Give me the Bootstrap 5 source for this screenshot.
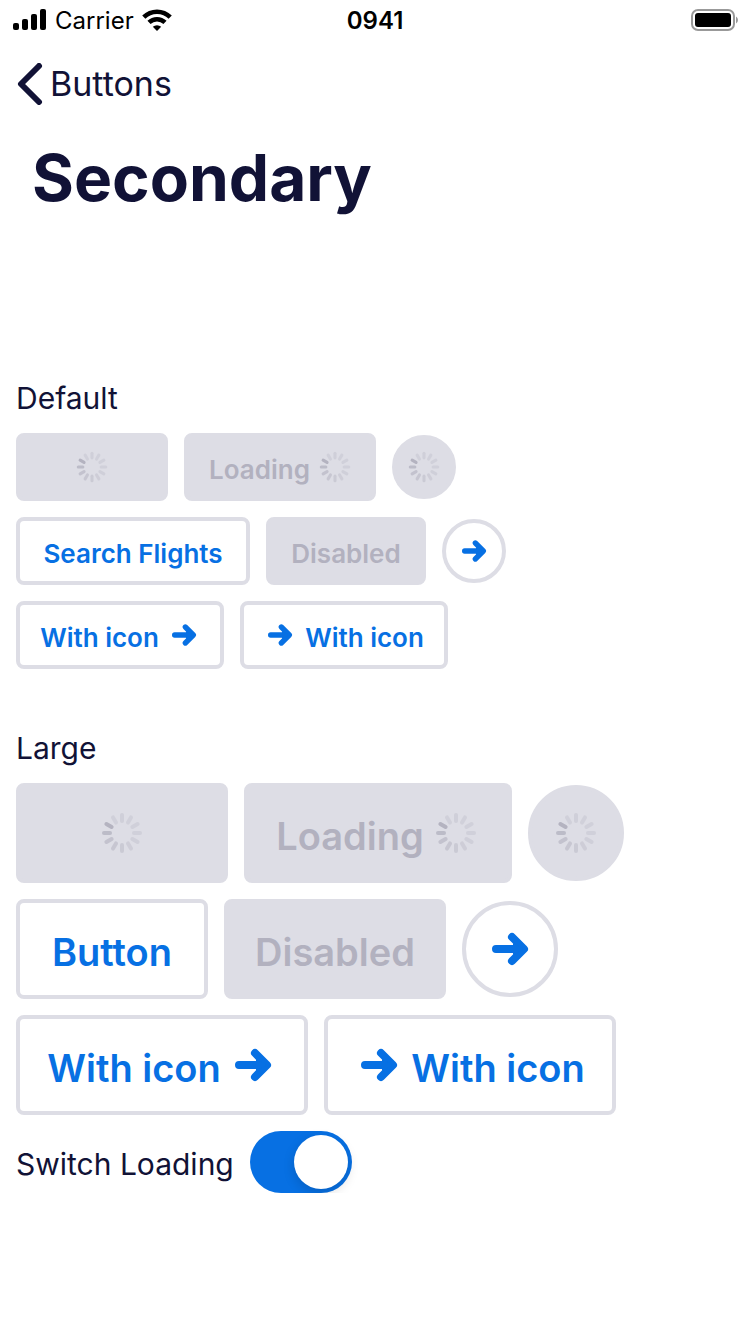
<!DOCTYPE html>
<html lang="en">
<head>
<meta charset="utf-8">
<meta name="viewport" content="width=device-width, initial-scale=1">
<title>Secondary buttons</title>
<link href="https://cdn.jsdelivr.net/npm/bootstrap@5.3.0/dist/css/bootstrap.min.css" rel="stylesheet">
<style>
  :root { --ink: #111236; --blue: #0770e3; --line: #dddde5; --muted: #b2b1bf; }
  body { font-family: Inter, "Liberation Sans", sans-serif; color: var(--ink); background: #fff; }
  svg { display: block; flex: none; }
  .status-bar { height: 40px; padding: 0 12px; font-size: 24px; line-height: 32px; color: #000; }
  .status-bar .side { flex: 1 1 0; }
  .status-bar span { padding-top: 2px; }
  .nav-row { height: 88px; padding: 0 16px; }
  .back-link { color: var(--ink); font-size: 34px; line-height: 40px; gap: 7px; }
  .page-title { font-size: 64px; line-height: 80px; font-weight: 700; margin: 10px 32px 160px; }
  .demo { padding: 0 16px; }
  .demo + .demo { margin-top: 59px; }
  .demo-title { font-size: 30px; line-height: 40px; font-weight: 400; margin: 0 0 15px; }
  .demo-rows { gap: 16px; }
  .sec-btn {
    --bs-btn-color: var(--blue); --bs-btn-bg: #fff; --bs-btn-border-color: var(--line);
    --bs-btn-hover-color: var(--blue); --bs-btn-hover-bg: #f1f2f8; --bs-btn-hover-border-color: var(--line);
    --bs-btn-active-color: var(--blue); --bs-btn-active-bg: #f1f2f8; --bs-btn-active-border-color: var(--line);
    --bs-btn-disabled-color: var(--muted); --bs-btn-disabled-bg: var(--line);
    --bs-btn-disabled-border-color: var(--line); --bs-btn-disabled-opacity: 1;
    --bs-btn-border-width: 4px; --bs-btn-border-radius: 8px;
    --bs-btn-padding-x: 20px; --bs-btn-padding-y: 0; --bs-btn-font-size: 26px; --bs-btn-font-weight: 600;
    display: inline-flex; align-items: center; justify-content: center; gap: 9px;
    height: 68px; white-space: nowrap;
  }
  .sec-btn svg { width: 32px; height: 32px; }
  .sec-btn span { padding-top: 6px; line-height: 32px; }
  .sec-btn.big { --bs-btn-font-size: 38px; --bs-btn-padding-x: 28px; height: 100px; gap: 8px; }
  .sec-btn.big svg { width: 48px; height: 48px; }
  .sec-btn.big span { padding-top: 6px; line-height: 48px; }
  .sec-btn.round { --bs-btn-border-radius: 50%; --bs-btn-padding-x: 0; width: 64px; height: 64px; }
  .sec-btn.round.big { width: 96px; height: 96px; }
  .w-blank { width: 152px; } .w-load { width: 192px; } .w-search { width: 234px; }
  .w-off { width: 160px; } .w-icon { width: 208px; }
  .big.w-blank { width: 212px; } .big.w-load { width: 268px; } .big.w-text { width: 192px; }
  .big.w-off { width: 222px; } .big.w-icon { width: 292px; }
  .switch-row { gap: 16px; margin-top: 16px; }
  .switch-row label { font-size: 30px; line-height: 40px; padding-top: 4px; }
  .toggle.form-check-input {
    display: flex; width: 102px; height: 62px; margin: 0; padding: 4px; border: 0;
    border-radius: 31px; background: var(--line); cursor: pointer;
  }
  .toggle.form-check-input::before {
    content: ""; width: 54px; height: 54px; border-radius: 50%; background: #fff;
    box-shadow: 0 4px 12px rgba(0, 0, 0, .15);
  }
  .toggle.form-check-input:checked { background: var(--blue); justify-content: flex-end; }
</style>
</head>
<body>

<svg width="0" height="0" class="position-absolute" aria-hidden="true">
  <symbol id="arrow" viewBox="0 0 48 48">
    <path d="M10 24H37M26 12L38 24L26 36" fill="none" stroke="currentColor" stroke-width="8" stroke-linecap="round" stroke-linejoin="round"/>
    <path d="M27 18L38 24L27 30Z" fill="currentColor"/>
  </symbol>
  <g id="spokes" stroke="#b2b1bf" stroke-width="4" stroke-linecap="round">
    <path d="M24 6V12" opacity=".3"/>
    <path d="M24 6V12" opacity=".28" transform="rotate(30 24 24)"/>
    <path d="M24 6V12" opacity=".28" transform="rotate(60 24 24)"/>
    <path d="M24 6V12" opacity=".28" transform="rotate(90 24 24)"/>
    <path d="M24 6V12" opacity=".3" transform="rotate(120 24 24)"/>
    <path d="M24 6V12" opacity=".34" transform="rotate(150 24 24)"/>
    <path d="M24 6V12" opacity=".42" transform="rotate(180 24 24)"/>
    <path d="M24 6V12" opacity=".5" transform="rotate(210 24 24)"/>
    <path d="M24 6V12" opacity=".6" transform="rotate(240 24 24)"/>
    <path d="M24 6V12" opacity=".75" transform="rotate(270 24 24)"/>
    <path d="M24 6V12" opacity=".95" transform="rotate(300 24 24)"/>
    <path d="M24 6V12" opacity=".28" transform="rotate(330 24 24)"/>
  </g>
</svg>

<header>
  <div class="status-bar d-flex align-items-center">
    <div class="side d-flex align-items-center gap-2">
      <svg width="35" height="22" viewBox="0 0 35 22" aria-hidden="true">
        <rect x="1" y="14" width="6" height="7" rx="2"/><rect x="10" y="10" width="6" height="11" rx="2"/>
        <rect x="19" y="5" width="6" height="16" rx="2"/><rect x="28" y="0" width="6" height="21" rx="2"/>
      </svg>
      <span>Carrier</span>
      <svg width="30" height="22" viewBox="0 0 30 22" aria-hidden="true" fill="none" stroke="#000" stroke-width="4.500">
        <path d="M1.800 8.200A18.700 18.700 0 0 1 28.200 8.200"/><path d="M7 13.400A11.500 11.500 0 0 1 23 13.400"/>
        <path d="M15 22L10.800 17.800A6.300 6.300 0 0 1 19.200 17.800Z" fill="#000" stroke="none"/>
      </svg>
    </div>
    <span class="fw-semibold">0941</span>
    <div class="side d-flex justify-content-end">
      <svg width="48" height="24" viewBox="0 0 48 24" aria-hidden="true">
        <rect x="2" y="2" width="42" height="20" rx="6" fill="none" stroke="#999" stroke-width="2"/>
        <rect x="5" y="5" width="36" height="14" rx="3"/><path d="M46 8.500Q48 9.500 48 12T46 15.500Z" fill="#999"/>
      </svg>
    </div>
  </div>
  <nav class="nav-row d-flex align-items-center">
    <a href="#" class="back-link d-flex align-items-center text-decoration-none">
      <svg width="27" height="42" viewBox="0 0 27 42" aria-hidden="true"><path d="M23 3L5 21L23 39" fill="none" stroke="currentColor" stroke-width="6" stroke-linecap="round" stroke-linejoin="round"/></svg>
      Buttons
    </a>
  </nav>
</header>

<main>
  <h1 class="page-title">Secondary</h1>

  <section class="demo">
    <h2 class="demo-title">Default</h2>
    <div class="demo-rows d-flex flex-column">
      <div class="d-flex flex-wrap align-items-center gap-3">
        <button type="button" class="btn sec-btn w-blank" disabled aria-label="Loading"><svg viewBox="3 3 42 42"><use href="#spokes"/></svg></button>
        <button type="button" class="btn sec-btn w-load" disabled><span>Loading</span><svg viewBox="3 3 42 42"><use href="#spokes"/></svg></button>
        <button type="button" class="btn sec-btn round" disabled aria-label="Loading"><svg viewBox="3 3 42 42"><use href="#spokes"/></svg></button>
      </div>
      <div class="d-flex flex-wrap align-items-center gap-3">
        <button type="button" class="btn sec-btn w-search"><span>Search Flights</span></button>
        <button type="button" class="btn sec-btn w-off" disabled><span>Disabled</span></button>
        <button type="button" class="btn sec-btn round" aria-label="Next"><svg><use href="#arrow"/></svg></button>
      </div>
      <div class="d-flex flex-wrap align-items-center gap-3">
        <button type="button" class="btn sec-btn w-icon"><span>With icon</span><svg><use href="#arrow"/></svg></button>
        <button type="button" class="btn sec-btn w-icon"><svg><use href="#arrow"/></svg><span>With icon</span></button>
      </div>
    </div>
  </section>

  <section class="demo">
    <h2 class="demo-title">Large</h2>
    <div class="demo-rows d-flex flex-column">
      <div class="d-flex flex-wrap align-items-center gap-3">
        <button type="button" class="btn sec-btn big w-blank" disabled aria-label="Loading"><svg viewBox="0 0 48 48"><use href="#spokes"/></svg></button>
        <button type="button" class="btn sec-btn big w-load" disabled><span>Loading</span><svg viewBox="0 0 48 48"><use href="#spokes"/></svg></button>
        <button type="button" class="btn sec-btn big round" disabled aria-label="Loading"><svg viewBox="0 0 48 48"><use href="#spokes"/></svg></button>
      </div>
      <div class="d-flex flex-wrap align-items-center gap-3">
        <button type="button" class="btn sec-btn big w-text"><span>Button</span></button>
        <button type="button" class="btn sec-btn big w-off" disabled><span>Disabled</span></button>
        <button type="button" class="btn sec-btn big round" aria-label="Next"><svg><use href="#arrow"/></svg></button>
      </div>
      <div class="d-flex flex-wrap align-items-center gap-3">
        <button type="button" class="btn sec-btn big w-icon"><span>With icon</span><svg><use href="#arrow"/></svg></button>
        <button type="button" class="btn sec-btn big w-icon"><svg><use href="#arrow"/></svg><span>With icon</span></button>
      </div>
    </div>
    <div class="switch-row d-flex align-items-center">
      <label for="loading">Switch Loading</label>
      <input class="form-check-input toggle" type="checkbox" role="switch" id="loading" checked>
    </div>
  </section>
</main>

<script src="https://cdn.jsdelivr.net/npm/bootstrap@5.3.0/dist/js/bootstrap.bundle.min.js"></script>
</body>
</html>
